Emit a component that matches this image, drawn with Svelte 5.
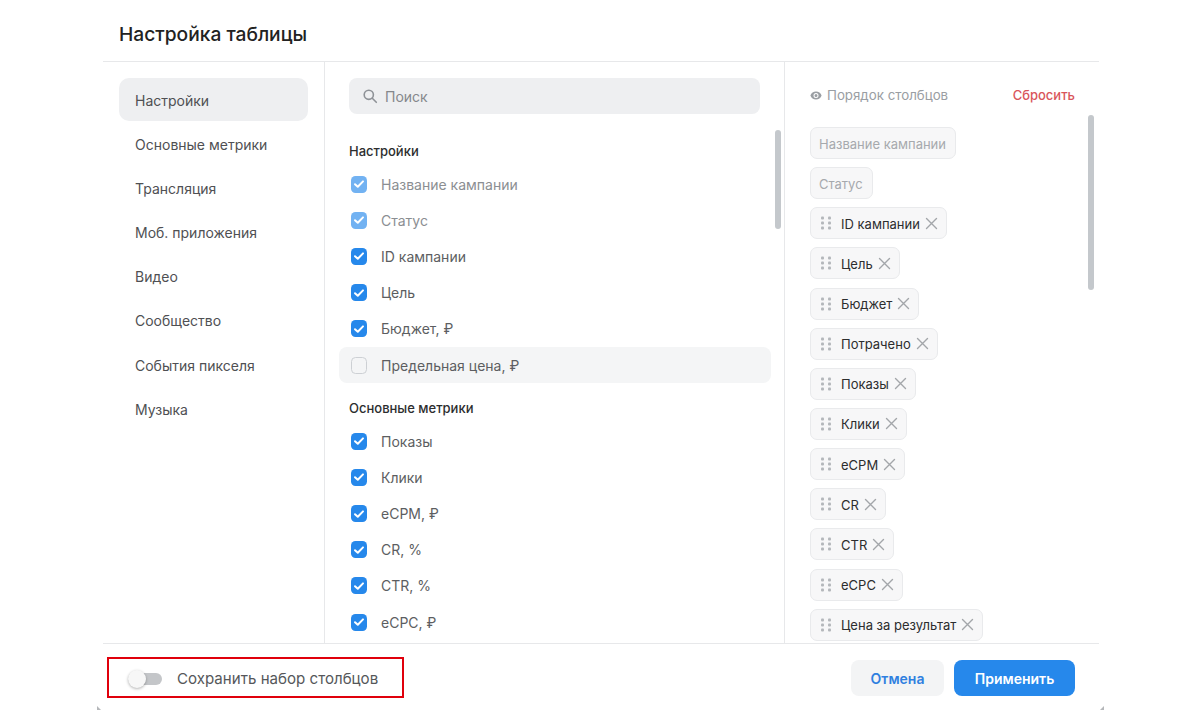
<script>
  const nav = ['Настройки','Основные метрики','Трансляция','Моб. приложения','Видео','Сообщество','События пикселя','Музыка'];
  const groups = [
    { title: 'Настройки', rows: [
      { label: 'Название кампании', state: 'locked' },
      { label: 'Статус', state: 'locked' },
      { label: 'ID кампании', state: 'on' },
      { label: 'Цель', state: 'on' },
      { label: 'Бюджет, ₽', state: 'on' },
      { label: 'Предельная цена, ₽', state: 'off' }
    ]},
    { title: 'Основные метрики', rows: [
      { label: 'Показы', state: 'on' },
      { label: 'Клики', state: 'on' },
      { label: 'eCPM, ₽', state: 'on' },
      { label: 'CR, %', state: 'on' },
      { label: 'CTR, %', state: 'on' },
      { label: 'eCPC, ₽', state: 'on' }
    ]}
  ];
  const fixedChips = ['Название кампании','Статус'];
  const chips = ['ID кампании','Цель','Бюджет','Потрачено','Показы','Клики','eCPM','CR','CTR','eCPC','Цена за результат'];
</script>

<div class="dialog">
  <header class="head"><h1>Настройка таблицы</h1></header>
  <div class="body">
    <nav class="nav">
      {#each nav as item, i}
        <div class="nav-item" class:active={i === 0}>{item}</div>
      {/each}
    </nav>
    <section class="mid">
      <div class="search">
        <svg width="16" height="16" viewBox="0 0 16 16" fill="none" stroke="#8e9297" stroke-width="1.6"><circle cx="6.8" cy="6.8" r="4.6"/><path d="M10.3 10.3l4 4" stroke-linecap="round"/></svg>
        <span>Поиск</span>
      </div>
      {#each groups as g}
        <h2>{g.title}</h2>
        <div class="rows">
          {#each g.rows as r}
            <div class="row {r.state}">
              <span class="box">
                {#if r.state !== 'off'}
                  <svg width="12" height="10" viewBox="0 0 12 10" fill="none" stroke="#fff" stroke-width="2" stroke-linecap="round" stroke-linejoin="round"><path d="M2 5.2l2.8 2.6L10 2.4"/></svg>
                {/if}
              </span>
              <span>{r.label}</span>
            </div>
          {/each}
        </div>
      {/each}
      <div class="scroll mid-scroll"></div>
    </section>
    <aside class="side">
      <div class="side-head">
        <span class="order">
          <svg width="12" height="9" viewBox="0 0 12 9"><path fill="#9a9ea3" d="M6 .5C3.400.5 1.300 2.100.4 4.500 1.300 6.900 3.400 8.500 6 8.500s4.700-1.600 5.600-4C10.700 2.100 8.600.5 6 .5zm0 6.500a2.500 2.500 0 1 1 0-5 2.500 2.500 0 0 1 0 5zm0-4a1.500 1.500 0 1 0 0 3 1.500 1.500 0 0 0 0-3z"/></svg>
          Порядок столбцов
        </span>
        <span class="reset">Сбросить</span>
      </div>
      <div class="chips">
        {#each fixedChips as c}
          <div class="chip fixed"><span class="label">{c}</span></div>
        {/each}
        {#each chips as c}
          <div class="chip">
            <svg class="grip" width="10" height="14" viewBox="0 0 10 14" fill="#b4b7bb">
              <rect x="0" y="0.500" width="3" height="3" rx="1"/><rect x="7" y="0.500" width="3" height="3" rx="1"/>
              <rect x="0" y="5.500" width="3" height="3" rx="1"/><rect x="7" y="5.500" width="3" height="3" rx="1"/>
              <rect x="0" y="10.500" width="3" height="3" rx="1"/><rect x="7" y="10.500" width="3" height="3" rx="1"/>
            </svg>
            <span class="label">{c}</span>
            <svg class="x" width="13" height="13" viewBox="0 0 13 13" fill="none" stroke="#a3a6aa" stroke-width="1.400" stroke-linecap="round"><path d="M1.500 1.500l10 10M11.500 1.500l-10 10"/></svg>
          </div>
        {/each}
      </div>
      <div class="scroll side-scroll"></div>
    </aside>
  </div>
  <footer class="foot">
    <div class="save">
      <span class="toggle"><span class="knob"></span></span>
      <span>Сохранить набор столбцов</span>
    </div>
    <div class="actions">
      <button class="btn cancel">Отмена</button>
      <button class="btn apply">Применить</button>
    </div>
  </footer>
</div>
<span class="corner left"></span>
<span class="corner right"></span>

<style>
  :global(body) { margin: 0; background: #fff; }
  .dialog {
    width: 996px; height: 720px; margin-left: 103px;
    display: flex; flex-direction: column; overflow: hidden;
    font-family: Inter, "Noto Sans", sans-serif; color: #2c2d2e;
    font-size: 14px;
  }
  .head { flex: none; box-sizing: border-box; border-bottom: 1px solid #e7e8ea; height: 62px; padding: 21px 16px 0; }
  h1 { margin: 0; font-size: 19.200px; line-height: 26px; font-weight: 500; color: #222; }
  .body { height: 581px; flex: none; display: flex; overflow: hidden; border-bottom: 1px solid #e7e8ea; box-sizing: content-box; }
  .nav { width: 222px; flex: none; box-sizing: border-box; padding: 16px 16px 0 16px; border-right: 1px solid #e7e8ea; display: flex; flex-direction: column; }
  .nav-item { height: 44.100px; line-height: 44px; padding-left: 16px; border-radius: 10px; color: #4f5053; flex: none; }
  .nav-item.active { background: #eeeff1; height: 43px; margin-bottom: 2.100px; line-height: 45px; }
  .mid { width: 460px; flex: none; box-sizing: border-box; padding: 16px 14px 0 14px; border-right: 1px solid #e7e8ea; position: relative; overflow: hidden; }
  .search { margin: 0 10px; width: 411px; height: 36px; box-sizing: border-box; border-radius: 8px; background: #eeeff1; display: flex; align-items: center; gap: 7px; padding-left: 13px; color: #85888c; font-size: 14px; }
  h2 { margin: 28px 0 0 10px; font-size: 13px; line-height: 18px; font-weight: 500; color: #2c2d2e; }
  .rows { margin-top: 6px; }
  .rows + h2 { margin-top: 16px; }
  .row { height: 36.200px; display: flex; align-items: center; gap: 14px; padding-left: 12px; width: 432px; box-sizing: border-box; border-radius: 8px; color: #5c5e61; }
  .row.locked { color: #8b8e92; }
  .row.off { background: #f4f5f6; }
  .box { width: 16px; height: 17px; border-radius: 4.500px; background: #2688eb; display: flex; align-items: center; justify-content: center; box-sizing: border-box; flex: none; }
  .locked .box { background: #72b2f2; }
  .off .box { background: #f4f5f6; border: 1.500px solid #cdd0d4; }
  .scroll { position: absolute; width: 6px; border-radius: 3px; background: #c4c8cc; }
  .mid-scroll { left: 450px; top: 68px; height: 99px; }
  .side { flex: 1; box-sizing: border-box; padding: 0 24px 0 25px; position: relative; overflow: hidden; }
  .side-head { display: flex; justify-content: space-between; align-items: center; height: 18px; margin-top: 24px; }
  .order { color: #9a9ea3; font-size: 13.300px; display: flex; align-items: center; gap: 5px; }
  .reset { color: #d9555b; font-size: 13px; font-weight: 500; }
  .chips { margin-top: 23px; display: flex; flex-direction: column; align-items: flex-start; gap: 8.150px; }
  .chip { height: 32px; box-sizing: border-box; display: flex; align-items: center; border: 1px solid #e9eaec; border-radius: 7px; background: #f7f7f8; padding: 0 8px 0 10px; font-size: 13px; color: #2c2d2e; white-space: nowrap; }
  .chip.fixed { padding: 0 9px 0 8px; color: #a6a9ad; }
  .label { padding-top: 1px; }
  .grip { margin-right: 10px; }
  .x { margin-left: 5px; }
  .side-scroll { left: 303px; top: 53px; height: 175px; }
  .foot { height: 77px; flex: none; box-sizing: border-box; display: flex; justify-content: space-between; padding: 13px 24px 0 4px; align-items: flex-start; }
  .save { width: 297px; height: 41px; box-sizing: border-box; border: 2px solid #e0000c; display: flex; align-items: center; gap: 15px; padding: 2px 0 0 19px; font-size: 15.100px; color: #55575a; }
  .toggle { width: 34px; height: 12px; background: #c4c6c9; border-radius: 6px; position: relative; flex: none; }
  .knob { position: absolute; left: 0; top: -3px; width: 18px; height: 18px; border-radius: 50%; background: #f7f7f7; box-shadow: 0 1px 3px rgba(0,0,0,.3); }
  .actions { display: flex; gap: 10px; margin-top: 3px; }
  .btn { height: 36px; border: 0; border-radius: 8px; font: 600 14px Inter, "Noto Sans", sans-serif; padding: 0; }
  .cancel { width: 93px; background: #f3f4f5; color: #2f80e0; }
  .apply { width: 121px; background: #2688eb; color: #fff; }
  .corner { position: absolute; top: 706px; width: 0; height: 0; border-bottom: 4px solid #b5b7ba; }
  .corner.left { left: 97px; border-right: 4px solid transparent; }
  .corner.right { left: 1100px; border-left: 4px solid transparent; }
</style>
